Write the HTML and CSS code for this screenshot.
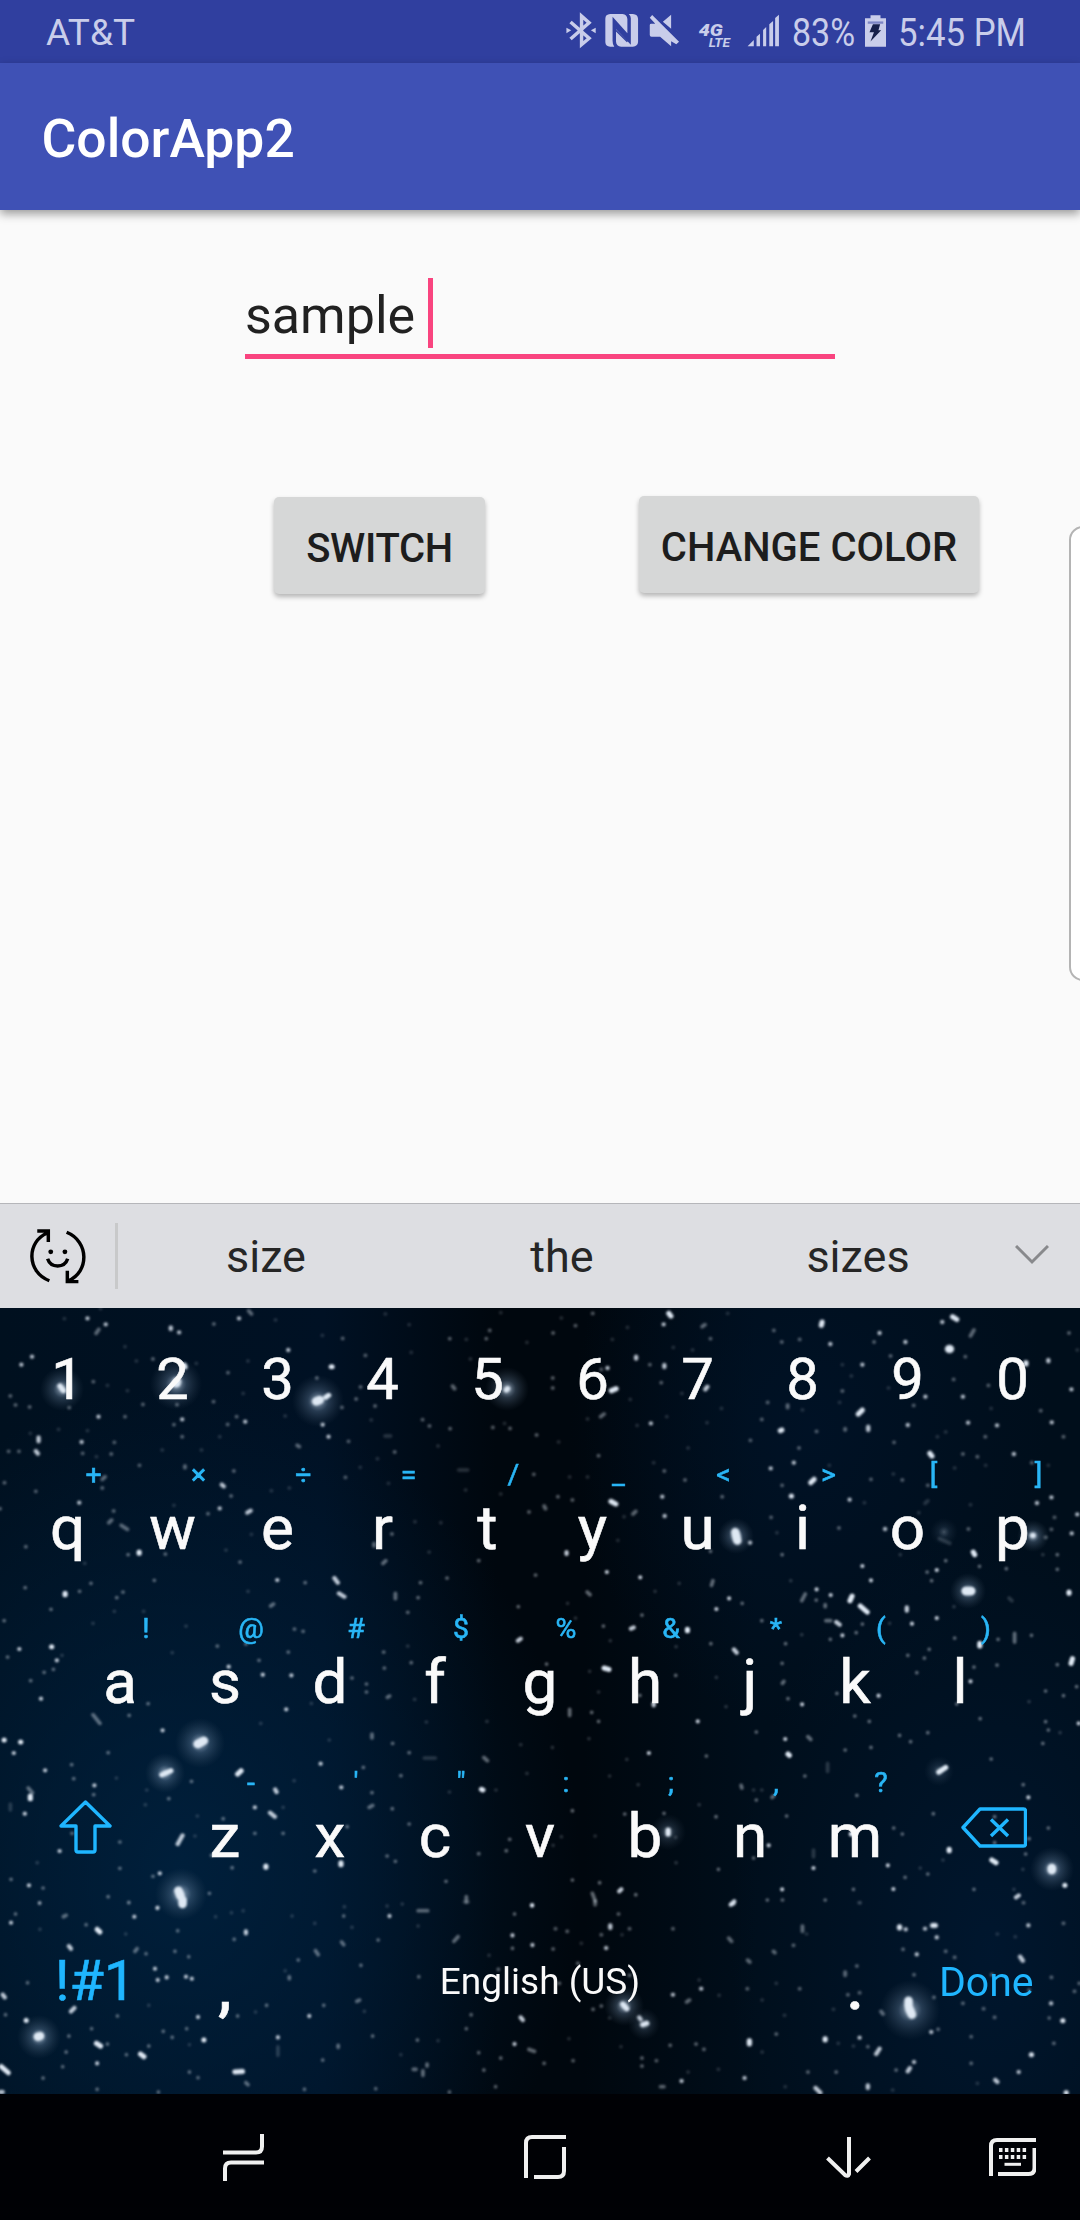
FILE: index.html
```html
<!DOCTYPE html>
<html lang="en">
<head>
<meta charset="utf-8">
<title>ColorApp2</title>
<link rel="stylesheet" href="styles.css">
</head>
<body>
<div class="screen">
  <header class="status">
    <span class="carrier">AT&amp;T</span>
    <svg class="status-icons" viewBox="70 0 630 189" preserveAspectRatio="none">
      <g class="soft-fill">
        <path d="M77 83l14 8-14 9zM162 83l-14 8 14 9z"/>
        <path d="M89 66l54 49-22 19V48l22 20-54 49" fill="none" stroke="#c9cdea" stroke-width="10"/>
        <path d="M204 42h36q13 2 14 15v43l-43-50v72q0 12 5 18h-12q-13 0-14-13V56q0-13 14-14z"/>
        <path d="M258 42h12q14 1 15 14v70q-1 13-15 14h-34q-14-2-15-15V88l43 46V55q0-8-6-13z"/>
        <path d="M220 74l34 36M220 91l34 34" fill="none" stroke="#303f9f" stroke-width="4"/>
        <path d="M381 44v42l-24-21zM319 75q0-4 4-4h12L319 53l7-8 78 80-8 8-15-9v15l-32-29h-25q-5 0-5-5z"/>
        <path d="M603 139l18-19v19zM629 110l10-9v38h-10zM648 90l9-9v58h-9zM666 73l11-10v76h-11zM683 54l11-10v95h-11z"/>
      </g>
      <text class="net" x="461" y="107" textLength="70" lengthAdjust="spacingAndGlyphs">4G</text>
      <text class="net lte" x="490" y="141" textLength="62" lengthAdjust="spacingAndGlyphs">LTE</text>
    </svg>
    <span class="battery-level">83%</span>
    <svg class="battery" viewBox="944 44 61 97" preserveAspectRatio="none">
      <path class="soft" d="M944 54h16v-9h29v9h16v86h-61z"/>
      <path d="M952 67h45" stroke="#7c85c4" stroke-width="7"/>
      <path d="M967 72h21l-5 18h8l-31 34 10-28h-13z" fill="#17204a"/>
    </svg>
    <span class="clock">5:45 PM</span>
  </header>
  <div class="appbar">ColorApp2</div>

  <main class="content">
    <div class="field"><span>sample</span><i class="caret"></i></div>
    <div class="buttons">
      <button class="btn switch">SWITCH</button>
      <button class="btn change">CHANGE COLOR</button>
    </div>
    <div class="edge-panel"></div>
  </main>

  <div class="suggest">
    <svg class="smiley" viewBox="88 115 162 166" preserveAspectRatio="none">
      <g fill="none" stroke="#000" stroke-width="10">
        <path d="M144 271C78 246 77 152 139 127M109 121h32v33M194 125c66 28 65 120 5 146M228 274h-32v-33"/>
        <path d="M139 205c9 29 49 29 58 0"/>
      </g>
      <circle cx="148" cy="184" r="7"/><circle cx="189" cy="184" r="7"/>
    </svg>
    <i class="divider"></i>
    <span class="word">size</span><span class="word">the</span><span class="word">sizes</span>
    <svg class="chevron" viewBox="0 0 34 20"><path d="M1 1l16 16L33 1" fill="none" stroke="#88898c" stroke-width="3"/></svg>
  </div>

  <div class="keyboard">
    <svg class="stars" viewBox="0 0 1080 786">
      <defs>
        <radialGradient id="glow"><stop offset="0" stop-color="#cfe0f2" stop-opacity=".75"/><stop offset=".4" stop-color="#7f9ab8" stop-opacity=".3"/><stop offset="1" stop-color="#567" stop-opacity="0"/></radialGradient>
      </defs>
      <g fill="url(#glow)">
        <circle cx="62" cy="81" r="22"/><circle cx="176" cy="76" r="26"/><circle cx="318" cy="93" r="26"/><circle cx="507" cy="81" r="22"/>
        <circle cx="736" cy="228" r="18"/><circle cx="1033" cy="228" r="16"/><circle cx="944" cy="224" r="14" opacity=".4"/>
        <circle cx="200" cy="435" r="25"/><circle cx="165" cy="465" r="20"/><circle cx="181" cy="586" r="26"/><circle cx="968" cy="283" r="18"/>
        <circle cx="668" cy="524" r="18" opacity=".6"/><circle cx="1052" cy="561" r="22"/><circle cx="39" cy="729" r="22"/>
        <circle cx="624" cy="698" r="20"/><circle cx="644" cy="716" r="16" opacity=".6"/><circle cx="910" cy="702" r="30"/><circle cx="939" cy="463" r="15" opacity=".5"/>
      </g>
      <g class="blurred">
        <g transform="translate(0 -118) scale(.34439 .33333)">
          <path class="huge" d="M918 634l10-4M512 580l2-6"/>
          <path class="big" d="M174 588l10 14M1470 600l4-4M535 525l2 6M962 530h2M954 616l-8 6"/>
          <path class="lit" d="M254 385h0M307 403h0M496 412v5M520 427h0M694 385h0M93 500h0M62 524h0M837 480h0M286 680h0M237 756h0M112 742v12M230 938h0M937 704h0M954 740h0M712 695h0M529 688h0M104 783l6 8M644 884l6 5M638 955h0M718 968l10-6"/>
          <path class="mid" d="M722 362l8 10M287 418l-8 12M444 507h0M621 402h0M995 445h0M1306 446h0M1412 446h0M1422 421h0M271 575h0M45 645h0M86 651h0M201 653h0M363 680h0M415 643h0M505 704h0M514 644h0M620 635h0M662 548h0M687 680h0M661 703h0M920 564h0M1047 591h0M1034 627h0M993 652h0M1089 648h0M1012 754h0M863 766l6 4M1146 786h0M1307 716h0M1247 708h0M1227 689h0M1314 588l6 8M1481 715h0M1431 712h0M1061 496h0M332 757h0M323 792h0M405 826h0M537 828v5M679 843h0M671 918h0M604 971h0M330 963h0M316 998l8-8M352 1006l18 12M13 878h0M104 904h0M55 784h0M25 784h0M297 894h0M305 860l-8 8M1003 862h0M1550 853h0M1558 735h0M1536 966h0M1138 1032h0M1086 1060v8M75 1070h0M529 740h0M0 956h0M30 618h0M240 790h0"/>
          <path class="dim" d="M292 356h0M187 386h0M363 470h0M312 586h0M370 602h0M800 390h0M936 436h0M1119 372h0M1188 404h0M1194 487h0M1354 448h0M1366 507h0M1530 457h0M1454 368h0M828 678h0M706 610h0M720 513h0M570 520h0M396 513h0M1118 738h16M1096 806h0M1046 832h0M840 894h0M788 902h0M1128 880h0M1332 840h26M1352 900h0M1272 768h0M1454 912h0M1280 998h0M170 718h0M254 722h0M88 730h0M280 800h0M471 780h0M585 780h0M505 946h0M730 1033h0M1205 995h0M1078 690h0M1465 700h0M638 740h0"/>
        </g>
        <g transform="translate(540 -118) scale(.34439 .33333)">
          <path class="huge" d="M1188 477h2M567 1026l6 26"/>
          <path class="big" d="M1198 380l12 8M819 396l-2 10M374 370l6 8M1132 790l6 8M924 672l12-12M698 722l4-2M207 602l14-6M1430 1036h2M730 918h0M1411 518v4M206 934l14 8M786 878l10-10"/>
          <path class="lit" d="M359 403h0M279 500v6M986 429h0M1168 396h0M1061 456h0M361 525v6M936 524h0M1119 620h0M1228 620h0M1543 598h0M953 710v10M1068 705h0M1243 698h0M1486 697h0M737 818h0M670 835h0M899 929h0M1544 1030h0M1485 922h0M1560 973h0M1443 939h0M362 978h0M610 1058h0M1002 1017h0M355 920h0M322 700h0M196 534h0M1376 792h0M1476 510v4M843 462h0M480 598l6-8M1327 706h0"/>
          <path class="mid" d="M103 407h0M153 370h0M38 429h0M37 564h0M37 594h0M495 446h0M471 410l8-6M679 421h0M702 456h0M754 448h0M970 456h0M1018 498h0M1250 438l10-18M1235 500h0M1536 429h0M1201 568h0M1302 586h0M878 603h0M661 637h0M719 645v8M644 688h0M803 724h0M886 716v4M611 751h0M752 774h0M1028 757h0M1085 646h0M170 797h0M361 843h0M421 870h0M529 920h0M703 886h0M671 982h0M1270 800h0M1126 886h0M1052 870h0M961 868h0M1520 740h0M1454 662h0M1293 740h0M1228 792h0M1428 818h0M94 930h0M52 920h0M12 948l4 8M270 972l8-8M1494 982h0M1485 1018h0M1468 1042h0M1244 1017h0M868 1014h0M186 672l-10 8M319 524h0M352 578h0M178 538h0"/>
          <path class="dim" d="M62 384h0M254 412h0M210 448h0M443 480h0M387 472h0M545 370h0M527 655h0M485 698h0M368 680h0M904 558h0M878 524h0M1012 594h0M870 637h0M762 660h0M1310 655h0M1178 726h0M1154 740h0M1204 834h0M1294 826h0M1476 826h0M1026 852h0M942 938h0M1126 932l-8 8M1250 944h0M138 687h0M54 756h0M86 861h0M138 861h0M330 818h0M430 774h0M262 628h0M412 610h0M840 826h0M244 980h0M226 1051h0M688 1028h0M1100 968h0M1560 480h0M282 706h0M1160 1046l30 14"/>
        </g>
        <g transform="translate(0 242) scale(.34439 .33333)">
          <path class="huge" d="M574 582l18-10M518 1022l6 16M530 1050v12"/>
          <path class="big" d="M470 674l26-12M189 130v4M404 6v4M12 570h0M60 576h0M690 672l10-10M150 290h0M1398 718l4 2M88 738v8M990 938v6M772 948v4"/>
          <path class="lit" d="M165 331h0M56 297h0M40 609h0M119 446h0M131 661h0M72 791h0M173 903h0M274 706h0M472 541h0M664 350h0M763 374h0M846 376h0M831 478h0M931 641h0M740 772h0M799 718l4 8M784 788l14 12M971 84l10 14M984 130l16 10M1512 266l-8 6M805 90h0M530 856l-14 26M464 970h0M84 1006h0M1545 1066h0M991 712h0"/>
          <path class="mid" d="M148 178h0M231 124h0M264 100h0M339 143h0M73 113h0M448 91h0M480 12h0M372 14h0M357 126h0M697 36h0M886 98h0M794 162l-8 6M714 282h0M631 288h0M837 306h0M855 237h0M880 244h0M752 331h0M430 461h0M375 496h0M270 494l20 26M314 608h0M208 644h0M214 686h0M490 746h0M556 694h0M128 367h0M155 358h0M22 321h0M12 212h0M89 392h0M82 714l12 14M272 734h0M209 850h0M348 876h0M348 955h0M444 979h0M674 953h0M614 916h0M648 806h0M822 850h0M740 850h0M914 963h0M1008 830h0M1188 822h0M1139 776h0M1080 728h0M1055 652h0M1164 677h0M1080 552v12M1140 580h0M1188 608h0M1405 622l10 10M1116 354h0M1131 438l-6 4M1064 402h0M1064 426h0M1022 384h0M1184 187h0M1148 130v16M1120 32l-8 8M1214 143h0M1221 98h0M1298 84h0M1390 32h0M1505 170h0M1555 75h0M1114 306h0M1194 338h0M1390 911h0M1480 868h0M1470 902h0M1354 1040v16M1295 994h0M1082 766l-10 6M608 1030h0M314 1040h0M374 1058h0M125 1014h0M32 988h0M115 1058h0M458 1072h0M1124 918h0M1148 934h0"/>
          <path class="dim" d="M246 40h0M332 184h0M270 220h0M540 228h0M500 308h0M720 124h0M417 184h0M180 316h0M338 684h0M426 720h0M422 764h0M573 798h0M566 858h0M854 692h0M822 772h0M757 520h0M904 460h0M956 570h0M1232 624h32M1305 726h0M1440 720h0M1414 514h0M1512 584h0M1530 670h0M1238 516h0M1204 448h0M1184 288h0M1246 6h0M108 938h0M30 762v18M656 0h0M1000 1070h0"/>
        </g>
        <g transform="translate(540 242) scale(.34439 .33333)">
          <path class="huge" d="M1486 954v6M1236 123h16"/>
          <path class="big" d="M1158 666l20-14M720 612l4 4M1312 930l12 8M1188 898v4M1546 326l-4 14M1258 6l4 8M428 238v4M186 354l14 4M904 852h0M372 840v12M906 138l-6 14M930 168l20 18M1277 280v8M1536 126v4M1524 1006h0"/>
          <path class="lit" d="M291 82h0M194 66h0M77 6v6M936 48h0M961 91h0M803 118h0M844 135h0M512 177h0M549 145h0M1152 60h0M1080 221h0M1152 204h0M878 256h0M983 437h0M1250 394h0M1065 172v10M272 232l-8 4M316 609h0M458 514h0M761 463h0M794 954h0M1010 946h0M703 1018h0M1026 1017h0M236 1018l-6 6M1390 1036l-8 6M1564 520h0M330 460v6M664 886h0M556 1062l8-8M860 216l10 8M563 298l8 10M712 567h0M1418 742h0"/>
          <path class="mid" d="M137 126l8 8M296 195h0M184 228h0M498 106l4-14M495 4h0M703 14h0M587 160h0M770 132l-10 20M802 150h0M828 164v6M1124 66h0M1137 92h0M1178 32h0M1276 49h0M1354 56h0M1502 14h0M1502 58h0M1204 264h0M1116 324h0M1130 298h0M1094 368h0M1068 316h0M1260 351h0M1327 345h0M1210 462h0M1378 250v26M1427 256h0M1330 268h0M1502 344h0M1468 423h0M1520 437h0M1558 410h0M1468 515h0M1476 540h0M1460 580h0M1278 506h0M1126 548h0M1044 556h0M1076 575h0M886 600h0M961 592h0M956 514h0M914 498h0M862 430h0M704 400l4-6M703 340h0M720 446h0M713 281h0M644 212h0M918 248h0M843 268h0M936 222h0M830 212h14M496 281h0M394 376h0M483 618h0M628 546h0M769 678h0M584 706l2 8M674 742l4-4M628 750h0M360 790h0M246 792h0M511 800h0M716 798h0M920 736h0M1027 834h0M1052 852h0M1142 791h0M1403 704h0M1476 834h0M1420 866h0M1410 912h0M1320 800h0M1320 878h0M152 1030l8 22M173 998h0M278 1034h0M94 990h0M518 958h0M620 924h0M910 1018h0M1060 982h0M1126 972h0M1260 1018h0M828 1050h0M660 1050h0M94 782h0M86 478v18M150 487h0M170 514h0M19 342h0M290 436h0M1310 627h0M778 560l8 8"/>
          <path class="dim" d="M103 204h0M80 160h0M204 272h0M395 290h0M404 100h0M334 124h0M728 92h0M1046 14h0M1362 144l8 8M1202 170h0M1460 14h0M1015 220h0M760 254h0M252 628h0M202 678h0M142 566h0M36 592h0M144 364h0M170 426h0M512 382h0M835 640v24M620 720h0M644 720h0M462 764h0M160 858h0M62 860h0M38 886h0M395 938h0M394 862h0M794 900v20M1104 954h0M1170 930h0M1402 958h0M1510 548h0M1420 455h0M1376 1018h0M930 1058h0M540 470h0M285 704h0"/>
        </g>
        <g transform="translate(0 592) scale(.34439 .33333)">
          <path class="huge" d="M110 410l6-2"/>
          <path class="big" d="M682 516l22-2M280 430l12 8M408 462l10 8M76 361h0M592 420h0M4 500l20 18M282 88l8 8"/>
          <path class="lit" d="M32 68h0M200 138l6 8M457 24h0M390 50h0M458 240h0M540 230h0M557 236h0M450 206h0M484 232h0M575 351h0M807 412h0M898 348h0M216 324l-10 10M714 94v6M1131 48h0M1545 16h0M1488 106h0M1546 135h0M1512 352l6 8M1494 432h0M8 284l6 8M0 576h8M282 490h0"/>
          <path class="mid" d="M115 10h0M45 42h0M192 46l-8 4M250 74h0M424 161h0M398 146l-6 8M508 154h0M548 170h0M680 118h0M516 92h0M866 180h0M916 152l8 12M998 48h0M992 126l6 8M1098 120h0M1214 32h28M1488 145h0M1494 42h0M1048 196h0M840 230v6M940 316h0M1044 300l-8 4M982 436v6M937 480h0M690 348h0M774 316h0M542 386h0M474 394h0M500 412h0M341 348h0M192 456h0M200 408h0M182 500h0M125 534h0M282 568h0M266 386h0M432 438h0M367 464h0M312 432h0M460 576h0M550 516h0M575 533h0M714 548l6 6M884 568h0M1091 566h0M1082 408h0M1212 420h0M1200 508h8M1240 492v6M1228 512v14M1405 510h0M1390 458h0M1354 386h0M1368 344h0M1536 448l16 6M1454 474h0M1439 560h0M1305 576h0M1330 110l-12 14M1216 230h0M80 248h0M16 344h0M1447 208h0"/>
          <path class="dim" d="M116 88h0M374 6h0M626 50h0M672 38h0M706 32h0M848 48h0M914 70h0M1022 82h0M1124 18h0M1168 12h0M828 212h0M656 344h0M742 336h0M807 440v26M432 316h0M550 434h0M1164 464h0M1272 422h0M1058 334h0M1214 78h0M1348 6h12M1420 166h0M365 102h0"/>
        </g>
        <g transform="translate(540 592) scale(.34439 .33333)">
          <path class="huge" d="M1070 302v16M1072 326l8 18"/>
          <path class="big" d="M240 312l12 14M298 374l12-4M608 422v10M828 416v4M1427 464h0M1044 80v4M1518 362h0M1528 578h0M1140 76h8"/>
          <path class="lit" d="M192 144h0M386 284h0M468 266h0M411 543h0M594 534h0M986 446l-10 16M928 413h0M1136 396h0M1062 88h0M1118 86h0M1152 112h0M1418 76h0M1094 163h0M1394 170l8 12M1390 516h0M1322 540l6 6M1074 504l-6 10M1086 486h0M800 564l14 14M554 14l8-4M1484 310h0M952 556v8M288 352l4 6M204 76v8"/>
          <path class="mid" d="M45 86h0M79 94h0M38 147h0M160 4v10M228 42h0M178 104h0M260 86h0M386 86h0M548 114l8 10M603 180l6 6M678 154l4 4M736 136h0M762 78v16M886 216v10M920 198h0M754 266h0M602 266h0M434 300l-8 6M178 318h0M154 328h0M453 432h0M476 448h0M378 436h0M296 474h0M296 498h0M338 482h0M12 490h0M96 482h0M350 560h10M686 402h0M952 440h0M778 516h0M860 516h0M1034 510h0M1252 490h0M1252 410h0M1156 388h0M990 334l6 8M1228 310h0M1288 326h0M1320 352h0M1144 292h0M1086 224h0M1054 148h0M1178 154h0M1204 172h0M1312 224h0M1485 232h0M1478 354h0M1492 430h0M1520 70h0M1552 274h0M1566 250h0M1404 8h0M894 284h0M928 278h0M1420 270h0M704 0h0M56 250h0M110 190h0M260 226h0"/>
          <path class="dim" d="M120 130h0M238 104h0M520 286h0M645 300h0M686 250h0M710 346h0M852 328h0M866 430h0M910 438h0M645 456h0M518 508h0M712 560h0M430 516h0M202 354h0M235 440h0M84 416h0M1024 570h0M1270 550h0M1328 102h0M1380 110h0M462 240h0M926 8h0M774 102h0"/>
        </g>
      </g>
    </svg>

    <div class="row digits">
      <span class="key">1</span><span class="key">2</span><span class="key">3</span><span class="key">4</span><span class="key">5</span><span class="key">6</span><span class="key">7</span><span class="key">8</span><span class="key">9</span><span class="key">0</span>
    </div>
    <div class="row">
      <span class="key">q<sup>+</sup></span><span class="key">w<sup>×</sup></span><span class="key">e<sup>÷</sup></span><span class="key">r<sup>=</sup></span><span class="key">t<sup>/</sup></span><span class="key">y<sup>_</sup></span><span class="key">u<sup>&lt;</sup></span><span class="key">i<sup>&gt;</sup></span><span class="key">o<sup>[</sup></span><span class="key">p<sup>]</sup></span>
    </div>
    <div class="row">
      <span class="key">a<sup>!</sup></span><span class="key">s<sup>@</sup></span><span class="key">d<sup>#</sup></span><span class="key">f<sup>$</sup></span><span class="key">g<sup>%</sup></span><span class="key">h<sup>&amp;</sup></span><span class="key">j<sup>*</sup></span><span class="key">k<sup>(</sup></span><span class="key">l<sup>)</sup></span>
    </div>
    <div class="row">
      <span class="key wide shift">
        <svg width="53" height="54" viewBox="0 0 53 54"><path d="M26.5 2L51 26H36v24q0 2-2 2H19q-2 0-2-2V26H2z"/></svg>
      </span>
      <span class="key">z<sup>-</sup></span><span class="key">x<sup>'</sup></span><span class="key">c<sup>"</sup></span><span class="key">v<sup>:</sup></span><span class="key">b<sup>;</sup></span><span class="key">n<sup>,</sup></span><span class="key">m<sup>?</sup></span>
      <span class="key wide erase">
        <svg width="66" height="41" viewBox="0 0 66 41"><path d="M19 2h43.500q2 0 2 2v33q0 2-2 2H19L2 20.500zM30 12.500l17 16.500M47 12.500L30 29"/></svg>
      </span>
    </div>
    <div class="row bottom">
      <span class="key wide symbols">!#1</span><span class="key punct">,</span><span class="key space">English (US)</span><span class="key punct">.</span><span class="key wide done">Done</span>
    </div>
  </div>

  <nav class="navbar">
    <svg class="recents" width="41" height="47" viewBox="0 0 41 47"><path d="M0 18.500h33q6 0 6-6V0M41 28.500H8q-6 0-6 6V47"/></svg>
    <svg class="home" width="42" height="44" viewBox="0 0 42 44"><path d="M2 43V8q0-6 6-6h34M40 12v24q0 6-6 6H10"/></svg>
    <svg class="hide" width="45" height="41" viewBox="0 0 45 41"><path d="M23 0v37q-1 3-4 1L1.500 21M43.500 21L30 34.500"/></svg>
    <svg class="ime" width="47" height="38" viewBox="0 0 47 38"><path d="M2 38V8q0-6 6-6h39M45.500 10v20q0 6-6 6H9"/><path d="M10 12h28M10 19h28" stroke-dasharray="3.500 2.400"/><path d="M15.500 26.300h16.500" stroke-width="3"/></svg>
  </nav>
</div>
</body>
</html>
```
FILE: styles.css
```css
* { box-sizing: border-box; }

body {
  margin: 0;
  font-family: Roboto, "Noto Sans", sans-serif;
}

.screen {
  width: 1080px;
  height: 2220px;
  display: flex;
  flex-direction: column;
  overflow: hidden;
  background: #fafafa;
}

/* Status bar */
.status {
  height: 63px;
  flex: none;
  display: flex;
  align-items: flex-start;
  background: #303f9f;
  color: #c9cdea;
}

.carrier {
  width: 518px;
  margin-left: 46px;
  font-size: 37px;
  line-height: 65px;
}

.status-icons { width: 217px; height: 63px; }
.soft-fill, .soft { fill: #c9cdea; }

.net {
  font: italic 900 52px Roboto, sans-serif;
  fill: #c9cdea;
}

.lte { font-size: 39px; font-weight: 700; }

.battery-level, .clock {
  font-size: 39.500px;
  line-height: 66px;
  white-space: nowrap;
  transform-origin: 0 0;
}

.battery-level { width: 59px; margin-left: 11px; transform: scaleX(.86); }
.battery { width: 21px; height: 32px; margin: 15px 0 0 14px; }
.clock { margin-left: 12px; transform: scaleX(.88); }

/* App bar */
.appbar {
  position: relative;
  height: 147px;
  flex: none;
  padding-left: 41.500px;
  background: #3f51b5;
  box-shadow: 0 4px 9px rgba(0, 0, 0, .38);
  color: #fff;
  font-size: 53.400px;
  font-weight: 500;
  line-height: 151px;
}

/* Activity */
.content {
  position: relative;
  height: 993px;
  flex: none;
  padding-top: 68px;
}

.field {
  display: flex;
  width: 590px;
  height: 81px;
  margin-left: 245px;
  border-bottom: 5px solid #f9447f;
  color: #212121;
  font-size: 52px;
  line-height: 75px;
}

.field span { width: 183px; }
.caret { width: 5px; height: 70px; background: #f9447f; }

.buttons {
  display: flex;
  align-items: flex-start;
  padding: 137px 0 0 274px;
}

.btn {
  height: 97px;
  padding: 0;
  border: 0;
  border-radius: 5px;
  background: #d6d7d7;
  box-shadow: 0 3px 5px rgba(0, 0, 0, .28);
  color: #1d1d1d;
  font: 500 40px/103px Roboto, sans-serif;
  white-space: nowrap;
}

.switch { width: 211px; margin-top: 1px; letter-spacing: -.3px; }
.change { width: 340px; margin-left: 154px; }

.edge-panel {
  position: absolute;
  top: 316px;
  right: -20px;
  width: 31px;
  height: 455px;
  border: 2px solid #b4b4b4;
  border-radius: 14px;
  background: #fff;
}

/* Suggestions */
.suggest {
  height: 105px;
  flex: none;
  display: flex;
  align-items: center;
  border-top: 1px solid #b5b6ba;
  background: #dddee2;
}

.smiley { width: 56px; height: 55px; margin-left: 30px; }
.divider { width: 3px; height: 66px; margin-left: 29px; background: #c8c9ca; }

.word {
  width: 296px;
  padding-top: 2px;
  color: #262626;
  font-size: 45px;
  line-height: 104px;
  text-align: center;
}

.chevron { width: 34px; height: 20px; margin: -3px 0 0 9px; }

/* Keyboard */
.keyboard {
  position: relative;
  height: 786px;
  flex: none;
  padding: 0 14.500px;
  background:
    radial-gradient(ellipse 400px 480px at 180px 560px, rgba(0, 34, 64, .85), transparent),
    radial-gradient(ellipse 260px 420px at 990px 640px, rgba(0, 26, 54, .7), transparent),
    radial-gradient(ellipse 240px 300px at 810px 120px, rgba(0, 20, 44, .6), transparent),
    linear-gradient(90deg, #00101f 0, #001124 30%, #00070e 46%, #00070e 54%, #000e1b 70%, #000e1b 100%);
  color: #fafafa;
}

.stars {
  position: absolute;
  inset: 0;
  width: 1080px;
  height: 786px;
}

.blurred { fill: none; stroke: #dfe9f4; stroke-linecap: round; filter: blur(.9px); }
.huge { stroke-width: 25px; }
.big { stroke-width: 15px; }
.lit { stroke-width: 12.500px; opacity: .85; }
.mid { stroke-width: 11px; opacity: .42; }
.dim { stroke-width: 11px; opacity: .18; }

.row {
  position: relative;
  display: flex;
  justify-content: center;
  height: 153.800px;
  font-size: 62px;
  line-height: 153.800px;
}

.digits { height: 143px; font-size: 58px; line-height: 143px; }

.key {
  position: relative;
  width: 105px;
  text-align: center;
  -webkit-text-stroke: .6px currentColor;
}

.key sup {
  position: absolute;
  top: 7px;
  left: 48.500px;
  width: 60px;
  color: #29b6f6;
  font-size: 28.500px;
  line-height: 33px;
}

.wide { width: 157.500px; color: #1fb6ff; }
.shift, .erase { display: flex; align-items: center; justify-content: center; }
.shift { padding: 0 17px 16px 0; }
.erase { padding: 0 0 16px 15px; }
.key svg { fill: none; stroke: #1fb6ff; stroke-width: 3.400px; stroke-linejoin: round; }

.bottom { height: 138px; line-height: 138px; }
.symbols { padding-left: 3px; font-size: 56px; }
.punct { padding-top: 7px; font-weight: 500; }
.space { width: 525px; padding-top: 1px; font-size: 37px; -webkit-text-stroke: 0; }
.done { padding-top: 1px; font-size: 41px; -webkit-text-stroke: 0; }

/* Navigation */
.navbar {
  position: relative;
  height: 126px;
  flex: none;
  display: flex;
  align-items: center;
  background: #000105;
}

.navbar svg { fill: none; stroke: #f0f0f0; stroke-width: 4px; }
.recents { margin-left: 223px; }
.home { margin-left: 260px; }
.hide { margin-left: 260px; }
.ime { margin-left: 118px; }
```
